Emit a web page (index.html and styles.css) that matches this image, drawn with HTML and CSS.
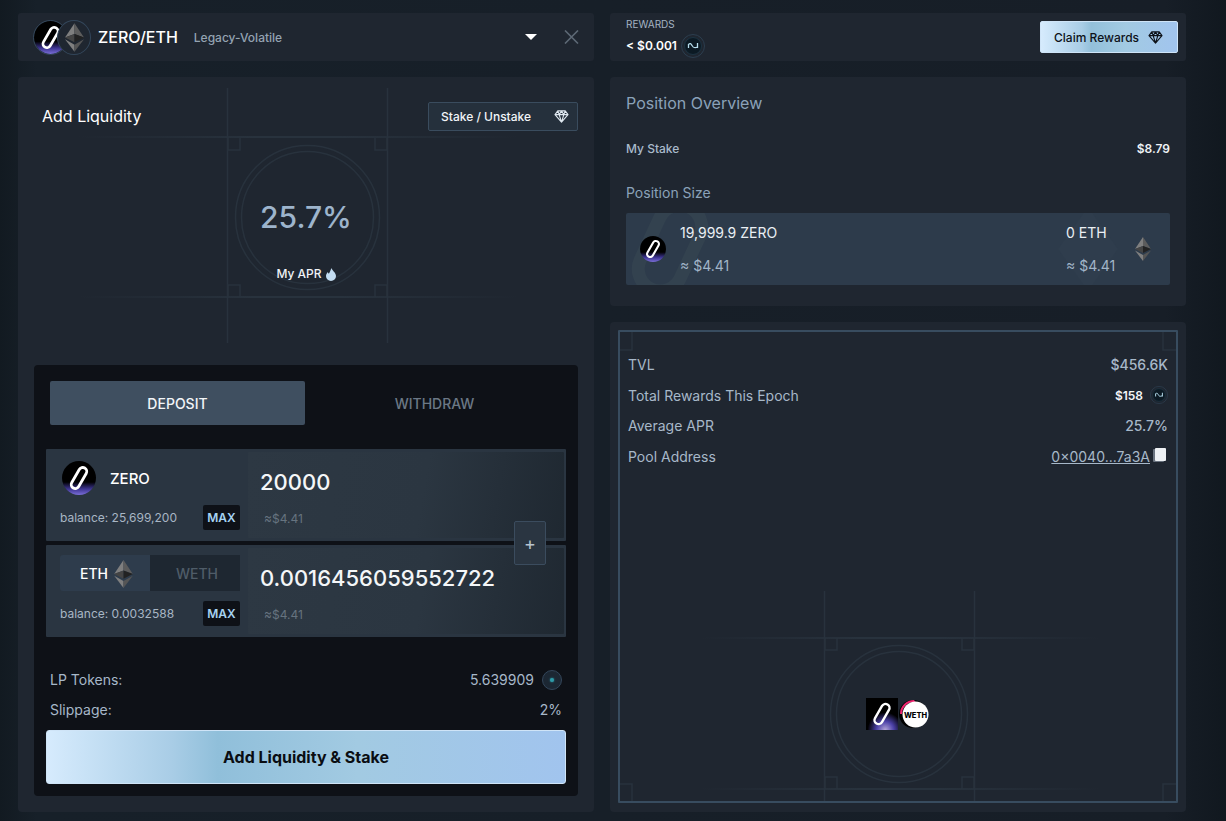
FILE: index.html
```html
<!DOCTYPE html>
<html lang="en">
<head>
<meta charset="utf-8">
<title>ZERO/ETH</title>
<link rel="stylesheet" href="styles.css">
</head>
<body>
<svg class="defs" width="0" height="0" aria-hidden="true">
  <defs>
    <linearGradient id="glow" x1="0" x2="0" y1="0" y2="1">
      <stop offset="0" stop-color="#000"/>
      <stop offset="0.62" stop-color="#000"/>
      <stop offset="0.82" stop-color="#3c3390"/>
      <stop offset="1" stop-color="#7a6ed8"/>
    </linearGradient>
    <linearGradient id="fadeH" x1="0" x2="1" y1="0" y2="0">
      <stop offset="0" stop-color="#28323d" stop-opacity="0"/>
      <stop offset="0.4" stop-color="#28323d"/>
      <stop offset="0.6" stop-color="#28323d"/>
      <stop offset="1" stop-color="#28323d" stop-opacity="0"/>
    </linearGradient>
    <symbol id="zero" viewBox="0 0 34 34">
      <circle cx="17" cy="17" r="17" fill="url(#glow)"/>
      <rect x="13" y="5.500" width="8" height="23" rx="4" fill="none" stroke="#fff" stroke-width="2.800" transform="rotate(30 17 17)"/>
    </symbol>
    <symbol id="eth" viewBox="0 0 16 24">
      <polygon points="8,0 0,12 8,9" fill="#7f7f7f"/>
      <polygon points="8,0 16,12 8,9" fill="#5c5c5c"/>
      <polygon points="0,12 8,9 8,16" fill="#444"/>
      <polygon points="16,12 8,9 8,16" fill="#222"/>
      <polygon points="0,13.500 8,18 8,24" fill="#7f7f7f"/>
      <polygon points="16,13.500 8,18 8,24" fill="#555"/>
    </symbol>
    <symbol id="gem" viewBox="0 0 16 14">
      <path d="M4 1h8l3 4-7 8-7-8zM1 5h14M4 1l1.500 4L8 13l2.500-8L12 1M5.500 5L8 1l2.500 4" fill="none" stroke="currentColor" stroke-width="1.200" stroke-linejoin="round"/>
    </symbol>
    <symbol id="reward" viewBox="0 0 24 24">
      <circle cx="12" cy="12" r="11.500" fill="none" stroke="#2c3e4f"/>
      <circle cx="12" cy="12" r="8.500" fill="#0c1a24" stroke="#1d3342"/>
      <path d="M7.500 10.500c1.500-1.500 2.500-1 3.500 1s2 3 5.500 1.500M16.500 9v5M7.500 10v4" fill="none" stroke="#b5dcec" stroke-width="1.300"/>
    </symbol>
  </defs>
</svg>

<main class="layout">
  <section class="column">
    <header class="bar pair-bar">
      <div class="pair-icons">
        <svg class="pair-zero"><use href="#zero"/></svg>
        <span class="pair-eth"><svg class="pair-eth-glyph"><use href="#eth"/></svg></span>
      </div>
      <span class="pair-name">ZERO/ETH</span>
      <span class="pair-type">Legacy-Volatile</span>
      <span class="caret"></span>
      <svg class="close" viewBox="0 0 15 14"><path d="M1 0.500l13 13M14 0.500l-13 13" stroke="currentColor" stroke-width="1.600" fill="none"/></svg>
    </header>

    <div class="card add-card">
      <svg class="backdrop" viewBox="0 0 576 300">
        <g class="bd-lines">
          <path d="M209.500 11v255M369.500 11v255"/>
          <path d="M210 61v12h12V61M369 61v12h-12V61M210 220v-12h12v12M369 220v-12h-12v12"/>
          <circle cx="289.500" cy="140.500" r="72"/>
          <circle cx="289.500" cy="140.500" r="66"/>
        </g>
        <rect x="60" y="59" width="440" height="2" fill="url(#fadeH)"/>
        <rect x="60" y="219" width="440" height="2" fill="url(#fadeH)"/>
      </svg>
      <div class="add-head">
        <h2 class="add-title">Add Liquidity</h2>
        <button class="stake-btn">Stake / Unstake <svg class="gem-sm"><use href="#gem"/></svg></button>
      </div>
      <div class="apr">
        <div class="apr-value">25.7%</div>
        <div class="apr-label">My APR
          <svg class="flame" viewBox="0 0 10 13"><path d="M5.500 0c.5 2.500 4.500 4.500 4.500 8a5 5 0 0 1-10 0c0-2 1-3 2-4 0 1 .5 1.500 1 1.500C4 4 4.500 2 5.500 0z" fill="#c3ddf2"/></svg>
        </div>
      </div>

      <div class="panel">
        <div class="tabs">
          <div class="tab tab-active">DEPOSIT</div>
          <div class="tab">WITHDRAW</div>
        </div>
        <div class="tokens">
          <div class="token-row">
            <div class="token-side">
              <div class="token-top">
                <svg class="zero-lg"><use href="#zero"/></svg>
                <span class="token-name">ZERO</span>
              </div>
              <div class="balance-row">
                <span class="balance">balance: 25,699,200</span>
                <span class="max">MAX</span>
              </div>
            </div>
            <div class="token-input">
              <div class="amount">20000</div>
              <div class="usd">≈$4.41</div>
            </div>
          </div>
          <div class="token-row">
            <div class="token-side">
              <div class="toggle">
                <div class="toggle-on">ETH <svg class="eth-md"><use href="#eth"/></svg></div>
                <div class="toggle-off">WETH</div>
              </div>
              <div class="balance-row">
                <span class="balance">balance: 0.0032588</span>
                <span class="max">MAX</span>
              </div>
            </div>
            <div class="token-input">
              <div class="amount">0.0016456059552722</div>
              <div class="usd">≈$4.41</div>
            </div>
          </div>
          <div class="plus">+</div>
        </div>
        <div class="summary">
          <div class="sum-row"><span>LP Tokens:</span><span class="sum-right">5.639909 <span class="lp-icon"><span class="lp-dot"></span></span></span></div>
          <div class="sum-row"><span>Slippage:</span><span>2%</span></div>
        </div>
        <button class="primary">Add Liquidity &amp; Stake</button>
      </div>
    </div>
  </section>

  <section class="column">
    <header class="bar reward-bar">
      <div class="reward-info">
        <div class="reward-label">REWARDS</div>
        <div class="reward-value">&lt; $0.001 <svg class="reward-lg"><use href="#reward"/></svg></div>
      </div>
      <button class="claim">Claim Rewards <svg class="gem-claim"><use href="#gem"/></svg></button>
    </header>

    <div class="card overview">
      <h2 class="ov-title">Position Overview</h2>
      <div class="stake-row"><span>My Stake</span><strong>$8.79</strong></div>
      <h3 class="size-title">Position Size</h3>
      <div class="position">
        <svg class="watermark wm-left" viewBox="0 0 90 72"><rect x="22" y="-10" width="44" height="90" rx="22" fill="none" stroke="#33424f" stroke-width="13" transform="rotate(25 44 35)"/></svg>
        <svg class="watermark wm-right" viewBox="0 0 90 72"><polygon points="48,-6 78,36 48,78 18,36" fill="#2f3d4d"/></svg>
        <svg class="zero-pos"><use href="#zero"/></svg>
        <div class="pos-col pos-zero">
          <span class="pos-amt">19,999.9 ZERO</span>
          <span class="pos-usd">≈ $4.41</span>
        </div>
        <div class="pos-col pos-eth">
          <span class="pos-amt">0 ETH</span>
          <span class="pos-usd">≈ $4.41</span>
        </div>
        <svg class="eth-pos"><use href="#eth"/></svg>
      </div>
    </div>

    <div class="card pool">
      <div class="frame">
        <svg class="frame-art" viewBox="0 0 556 469">
          <g class="bd-lines">
            <path d="M204.500 259v210M354.500 259v210"/>
            <path d="M205 306v12h12v-12M354 306v12h-12v-12M205 457v-12h12v12M354 457v-12h-12v12"/>
            <circle cx="279" cy="382" r="68.500"/>
            <circle cx="279" cy="382" r="62.500"/>
            <path d="M0 18h12V0M556 18h-13V0M0 452h12v17M556 452h-13v17"/>
          </g>
          <rect x="80" y="305" width="400" height="2" fill="url(#fadeH)"/>
          <rect x="80" y="456" width="400" height="2" fill="url(#fadeH)"/>
        </svg>
        <div class="stats">
          <div class="stat"><span>TVL</span><span class="stat-med">$456.6K</span></div>
          <div class="stat"><span>Total Rewards This Epoch</span><span class="stat-strong">$158 <svg class="reward-sm"><use href="#reward"/></svg></span></div>
          <div class="stat"><span>Average APR</span><span class="stat-med">25.7%</span></div>
          <div class="stat"><span>Pool Address</span><span class="addr"><span class="addr-link">0×0040...7a3A</span><span class="copy"></span></span></div>
        </div>
        <div class="pool-icons">
          <svg class="pool-zero" viewBox="0 0 32 32">
            <defs>
              <radialGradient id="sqglow" cx="0.6" cy="1" r="0.55">
                <stop offset="0" stop-color="#b3a5d8"/>
                <stop offset="0.5" stop-color="#4a3fa6"/>
                <stop offset="1" stop-color="#000"/>
              </radialGradient>
            </defs>
            <rect width="32" height="32" fill="url(#sqglow)"/>
            <rect x="12" y="5" width="8" height="22" rx="4" fill="none" stroke="#fff" stroke-width="2.400" transform="rotate(30 16 16)"/>
          </svg>
          <svg class="pool-weth" viewBox="0 0 30 30">
            <circle cx="14" cy="15" r="14" fill="#000"/>
            <path d="M1 15A14 14 0 0 1 15 1l1.500 2A12 12 0 0 0 3 15z" fill="#f0246f"/>
            <circle cx="16.500" cy="15.500" r="13" fill="#fff"/>
            <text x="16.500" y="18.500" class="weth-text" text-anchor="middle">WETH</text>
          </svg>
        </div>
      </div>
    </div>
  </section>
</main>
</body>
</html>
```

FILE: styles.css
```css
* { box-sizing: border-box; }
html, body { margin: 0; height: 821px; overflow: hidden; }
body {
  background: linear-gradient(90deg, #121a21 0, #172029 3%, #171e27 95%, #11181f 100%);
  font-family: Inter, "Liberation Sans", sans-serif;
  color: #fff;
}
.defs { position: absolute; }
button { font-family: inherit; cursor: pointer; }
h2, h3 { margin: 0; font-weight: 400; }

.layout {
  display: grid;
  grid-template-columns: 576px 576px;
  column-gap: 16px;
  padding: 13px 0 9px 18px;
  height: 821px;
}
.column { display: flex; flex-direction: column; gap: 16px; min-height: 0; }
.bar { height: 48px; background: #1f2630; border-radius: 3px; display: flex; align-items: center; flex: none; }
.card { background: #1f2630; border-radius: 4px; position: relative; }

/* pair bar */
.pair-bar { padding: 0 15px 0 15px; }
.pair-icons { display: flex; width: 57px; flex: none; }
.pair-zero { width: 35px; height: 35px; border-radius: 50%; border: 1px solid #33465a; flex: none; }
.pair-eth {
  width: 34px; height: 35px; margin-left: -11px; border-radius: 50%;
  border: 1px solid #33465a; background: #1f2630; display: flex; align-items: center; justify-content: center; flex: none;
  position: relative;
}
.pair-eth-glyph { width: 19px; height: 29px; }
.pair-name { margin-left: 8px; font-size: 16px; font-weight: 500; }
.pair-type { margin-left: 16px; font-size: 12px; font-weight: 500; color: #94a3b2; }
.caret {
  margin-left: auto; width: 0; height: 0;
  border-left: 6px solid transparent; border-right: 6px solid transparent; border-top: 6px solid #fff;
}
.close { width: 15px; height: 14px; margin-left: 27px; color: #5d6975; }

/* add liquidity */
.add-card { flex: 1; padding: 25px 16px 16px; display: flex; flex-direction: column; }
.backdrop { position: absolute; left: 0; top: 0; width: 576px; height: 300px; }
.bd-lines { fill: none; stroke: #28323d; stroke-width: 1.500; }
.add-head { display: flex; justify-content: space-between; align-items: center; padding-left: 8px; height: 29px; position: relative; }
.add-title { font-size: 16px; font-weight: 400; margin-bottom: 2px; }
.stake-btn {
  width: 150px; height: 29px; padding: 0 8px 0 12px; display: flex; align-items: center; justify-content: space-between;
  background: #25303c; border: 1px solid #3a4c5e; border-radius: 2px; color: #f2f5f8; font-size: 12px; font-weight: 500;
}
.gem-sm { width: 15px; height: 13px; color: #dfe8f0; }
.apr { height: 234px; padding-top: 66px; display: flex; flex-direction: column; align-items: center; position: relative; }
.apr-value { font-size: 30px; line-height: 40px; font-weight: 500; color: #9db4cc; }
.apr-label { margin-top: 29px; font-size: 12px; line-height: 16px; font-weight: 500; display: flex; align-items: center; gap: 4px; color: #f0f3f6; }
.flame { width: 10px; height: 13px; }

.panel { flex: 1; background: #0e1117; border-radius: 4px; padding: 16px 12px 12px; position: relative; }
.tabs { display: grid; grid-template-columns: 255px 1fr; margin: 0 2px 0 4px; height: 44px; }
.tab { display: flex; align-items: center; justify-content: center; font-size: 14px; font-weight: 500; color: #6b7885; }
.tab-active { background: #3f4f60; color: #f2f5f8; border-radius: 2px; }

.tokens { margin-top: 24px; display: flex; flex-direction: column; gap: 4px; position: relative; }
.token-row { height: 92px; background: #2a3541; display: flex; padding: 3px 2px 3px 0; border-radius: 1px; }
.token-side { width: 202px; padding: 0 8px 0 14px; display: flex; flex-direction: column; justify-content: space-between; flex: none; }
.token-top { display: flex; align-items: center; gap: 14px; padding: 9px 0 0 2px; }
.zero-lg { width: 34px; height: 34px; flex: none; }
.token-name { font-size: 15px; font-weight: 500; }
.balance-row { display: flex; justify-content: space-between; align-items: center; height: 25px; margin-bottom: 8px; }
.balance { font-size: 12px; color: #a8b6c4; }
.max { width: 37px; height: 25px; display: flex; align-items: center; justify-content: center; background: #0e1117; border-radius: 2px; font-size: 12px; font-weight: 600; color: #a6d3f2; }
.toggle { display: grid; grid-template-columns: 90px 90px; height: 36px; margin-top: 7px; }
.toggle-on { background: #2e3c4c; display: flex; align-items: center; justify-content: center; gap: 6px; padding: 1px 0 0 3px; font-size: 14px; font-weight: 500; border-radius: 3px 0 0 3px; }
.toggle-off { background: #1e2731; display: flex; align-items: center; justify-content: center; padding: 1px 0 0 4px; font-size: 14px; font-weight: 500; color: #4f5c68; }
.eth-md { width: 19px; height: 28px; }
.token-input { flex: 1; padding: 12px 12px 0; background: linear-gradient(100deg, #2d3843 0, #2b3641 55%, #1f2831 100%); border-radius: 1px; }
.amount { font-size: 22px; line-height: 36px; font-weight: 500; color: #f4f6f8; }
.usd { margin-top: 11px; padding-left: 4px; font-size: 12px; line-height: 16px; color: #66737f; }
.plus {
  position: absolute; left: 468px; top: 72px; width: 32px; height: 44px;
  background: #2a3541; border: 1px solid #3b4c5e; border-radius: 2px; color: #b8c4cf;
  display: flex; align-items: center; justify-content: center; font-size: 18px;
}

.summary { margin-top: 28px; padding: 0 4px; }
.sum-row { display: flex; justify-content: space-between; align-items: center; height: 29.500px; font-size: 14px; color: #a7b8c9; }
.sum-right { display: flex; align-items: center; gap: 8px; }
.lp-icon { width: 20px; height: 20px; border-radius: 50%; background: #1c2733; border: 1px solid #33465a; display: flex; align-items: center; justify-content: center; }
.lp-dot { width: 4px; height: 4px; border-radius: 50%; background: #2f9aa8; box-shadow: 0 0 2px #2f9aa8; }
.primary {
  display: block; width: 520px; height: 54px; margin-top: 6px;
  border: 1px solid #cfe4f7; border-radius: 3px;
  background: linear-gradient(90deg, #d6ebfd 0, #a9cde6 24%, #90bfda 33%, #a2cae2 60%, #a1c4ee 100%);
  color: #0a0d12; font-size: 16px; font-weight: 700;
}

/* rewards */
.reward-bar { padding: 0 8px 0 16px; justify-content: space-between; }
.reward-label { font-size: 10px; line-height: 14px; color: #a4b3c2; }
.reward-value { margin-top: 3px; display: flex; align-items: center; gap: 4px; font-size: 12px; font-weight: 600; height: 24px; }
.reward-lg { width: 24px; height: 24px; }
.claim {
  width: 138px; height: 32px; padding: 0 14px 0 13px; display: flex; align-items: center; justify-content: space-between;
  border: 1px solid #cfe4f7; border-radius: 2px;
  background: linear-gradient(90deg, #d6ebfd 0, #a9cde6 30%, #93c0da 37%, #a2cae2 62%, #a1c4ee 100%);
  color: #0d1118; font-size: 12px; font-weight: 500;
}
.gem-claim { width: 15px; height: 13px; color: #0d1118; }

/* overview */
.overview { height: 229px; flex: none; padding: 16px; }
.ov-title { font-size: 16px; line-height: 20px; color: #8ba2b9; font-weight: 400; }
.stake-row { display: flex; justify-content: space-between; margin-top: 28px; font-size: 12px; line-height: 16px; font-weight: 500; color: #a9bacb; }
.stake-row strong { color: #f0f3f6; font-weight: 600; }
.size-title { margin-top: 27px; font-size: 14px; line-height: 18px; color: #8ba2b9; }
.position {
  margin-top: 11px; height: 72px; background: #2d3b4b; border-radius: 2px; position: relative; overflow: hidden;
  display: flex; align-items: stretch; padding: 0 19px 0 14px;
}
.watermark { position: absolute; top: 0; width: 90px; height: 72px; }
.wm-left { left: 0; }
.wm-right { right: 40px; }
.zero-pos { width: 26px; height: 30px; align-self: center; flex: none; position: relative; }
.pos-col { display: flex; flex-direction: column; justify-content: space-between; padding: 11px 0 10px; position: relative; }
.pos-zero { margin-left: 14px; }
.pos-eth { margin-left: auto; width: 69px; }
.pos-amt { font-size: 14px; line-height: 18px; color: #eaeff4; }
.pos-usd { font-size: 14px; line-height: 18px; color: #a2b5c8; }
.eth-pos { width: 16px; height: 24px; align-self: center; position: relative; flex: none; }

/* pool */
.pool { flex: 1; padding: 8px; }
.frame { height: 473px; border: 2px solid #384c5f; border-radius: 1px; position: relative; padding: 17.500px 8px 0; }
.frame-art { position: absolute; left: 0; top: 0; width: 556px; height: 469px; }
.stats { position: relative; }
.stat { display: flex; justify-content: space-between; align-items: center; height: 30.500px; font-size: 14px; color: #a7b8c9; }
.stat-med { font-weight: 500; }
.stat-strong { display: flex; align-items: center; gap: 7px; font-size: 12px; font-weight: 600; color: #f5f7f9; }
.reward-sm { width: 18px; height: 18px; }
.addr { display: flex; align-items: center; gap: 5px; }
.addr-link { text-decoration: underline; }
.copy {
  width: 11px; height: 13px; margin: -4px 2px 0 0; background: #eef1f4; border-radius: 1px; box-shadow: -2px 1px 0 #6b7480;
}
.pool-icons { position: absolute; left: 246px; top: 366px; display: flex; align-items: flex-start; gap: 1px; }
.pool-zero { width: 32px; height: 32px; flex: none; }
.pool-weth { width: 30px; height: 30px; margin-top: 1px; flex: none; overflow: visible; }
.weth-text { font-family: Inter, "Liberation Sans", sans-serif; font-size: 7.500px; font-weight: 800; fill: #000; }
```
